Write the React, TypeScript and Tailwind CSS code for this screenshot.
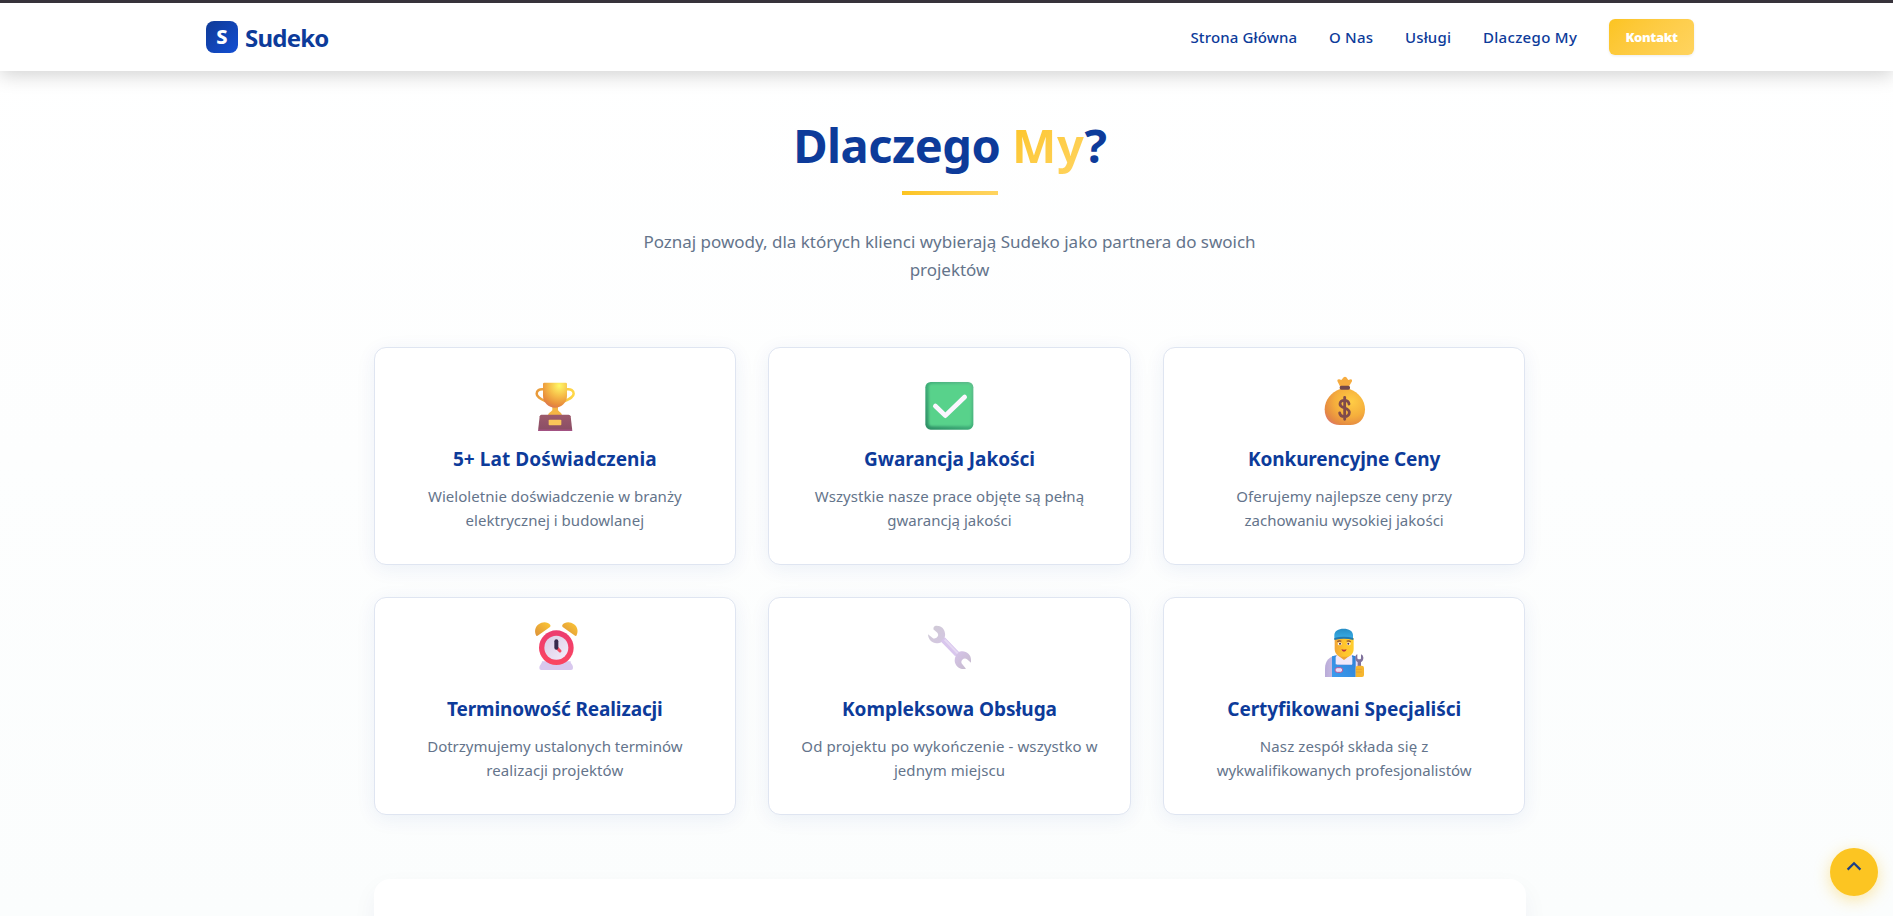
import React from "react";
import { clsx } from "clsx";

const TrophyIcon = () => (
  <svg viewBox="0 0 270 240" className="h-20 w-[90px]" aria-hidden="true">
    <defs>
      <radialGradient id="cup" cx="0.68" cy="0.12" r="0.95">
        <stop offset="0" stopColor="#fff867" />
        <stop offset="0.45" stopColor="#f6bd49" />
        <stop offset="0.8" stopColor="#e98f3b" />
        <stop offset="1" stopColor="#d97452" />
      </radialGradient>
      <linearGradient id="handles" x1="0" x2="1">
        <stop offset="0" stopColor="#e89a3c" />
        <stop offset="1" stopColor="#ffd846" />
      </linearGradient>
      <linearGradient id="plinth" x1="0" y1="0" x2="0" y2="1">
        <stop offset="0" stopColor="#9c5a6b" />
        <stop offset="0.85" stopColor="#8c4f66" />
        <stop offset="1" stopColor="#a8528a" />
      </linearGradient>
    </defs>
    <path d="M101 73C88 71 80 77 80 86c0 10 11 15 27 23M170 73c13-2 21 4 21 13 0 10-11 15-28 23" fill="none" stroke="url(#handles)" strokeWidth="7.5" />
    <path d="M127 122h17v14c4 5 12 8 12 16h-42c0-8 9-11 13-16z" fill="#f5b544" />
    <path d="M99 57q0-4 4-4h64q4 0 4 4v36c0 20-17 35-36 35S99 113 99 93z" fill="url(#cup)" />
    <path d="M94 149h82q5 0 6 5l5 44H84l5-44q1-5 5-5z" fill="url(#plinth)" />
    <rect x="116" y="164" width="38" height="17" rx="2.5" fill="#fac659" />
  </svg>
);

const CheckIcon = () => (
  <svg viewBox="-3 0 270 240" className="h-20 w-[90px]" aria-hidden="true">
    <defs>
      <linearGradient id="tile" x1="0" y1="1" x2="1" y2="0">
        <stop offset="0" stopColor="#2f8f66" />
        <stop offset="0.5" stopColor="#3fae78" />
        <stop offset="1" stopColor="#62bb8d" />
      </linearGradient>
      <filter id="soften" x="-10%" y="-10%" width="120%" height="120%">
        <feGaussianBlur stdDeviation="3" />
      </filter>
    </defs>
    <rect x="61" y="51" width="144" height="143" rx="16" fill="url(#tile)" />
    <rect x="71" y="56" width="129" height="128" rx="10" fill="#58d28b" filter="url(#soften)" />
    <path d="M91 123l30 29 58-56" fill="none" stroke="#fbf6ff" strokeWidth="14" strokeLinecap="round" strokeLinejoin="round" />
  </svg>
);

const MoneyBagIcon = () => (
  <svg viewBox="-3 0 270 240" className="h-20 w-[90px]" aria-hidden="true">
    <defs>
      <radialGradient id="sack" cx="0.66" cy="0.35" r="0.75">
        <stop offset="0" stopColor="#ffcd45" />
        <stop offset="0.55" stopColor="#f5ae3c" />
        <stop offset="0.9" stopColor="#e58a42" />
        <stop offset="1" stopColor="#e07d5d" />
      </radialGradient>
    </defs>
    <path d="M121 66l-9-18q-1-6 6-5l6 2 7-8q4-3 8 0l6 8 7-2q6 0 4 6l-10 17z" fill="#f6ac40" />
    <path d="M120 72h29c27 10 46 34 46 61 0 31-20 47-44 47h-32c-26 0-45-16-45-47 0-27 19-51 46-61z" fill="url(#sack)" />
    <rect x="119" y="62" width="31" height="12" rx="5" fill="#73484b" />
    <path d="M147 117c-1-8-7-11-14-11-8 0-13 5-13 11 0 15 28 9 28 25 0 8-6 13-14 13-9 0-14-4-15-11M134 97v66" fill="none" stroke="#804b4b" strokeWidth="8.5" strokeLinecap="round" />
  </svg>
);

const AlarmClockIcon = () => (
  <svg viewBox="0 15 270 240" className="h-20 w-[90px]" aria-hidden="true">
    <defs>
      <linearGradient id="bell" x1="0" y1="1" x2="1" y2="0">
        <stop offset="0" stopColor="#dc9139" />
        <stop offset="1" stopColor="#fdc936" />
      </linearGradient>
      <linearGradient id="rim" x1="0" y1="0" x2="0" y2="1">
        <stop offset="0" stopColor="#ec3c70" />
        <stop offset="1" stopColor="#fb4560" />
      </linearGradient>
      <linearGradient id="dial" x1="0" y1="0" x2="1" y2="1">
        <stop offset="0" stopColor="#d9cbe5" />
        <stop offset="1" stopColor="#f4edfa" />
      </linearGradient>
    </defs>
    <path d="M79 77C72 66 75 50 86 43c11-9 28-8 35 2q2 4-2 7L85 76q-4 3-6 1z" fill="url(#bell)" />
    <path d="M199 77c7-11 4-27-7-34-11-9-28-8-35 2q-2 4 2 7l34 24q4 3 6 1z" fill="url(#bell)" />
    <path d="M96 154h86q-2 4 5 11 2 3 2 9 0 6-6 6H94q-6 0-6-6 0-6 3-9 6-7 5-11z" fill="#d8c8ee" />
    <circle cx="139" cy="113" r="52" fill="url(#rim)" />
    <circle cx="139" cy="113" r="36" fill="url(#dial)" />
    <path d="M140 113l10 10" stroke="#f84b60" strokeWidth="9" strokeLinecap="round" />
    <path d="M139 94v19" stroke="#392a4c" strokeWidth="12" strokeLinecap="round" />
  </svg>
);

const WrenchIcon = () => (
  <svg viewBox="-3 15 270 240" className="h-20 w-[90px]" aria-hidden="true">
    <defs>
      <linearGradient id="steel" x1="0" y1="0" x2="1" y2="1">
        <stop offset="0" stopColor="#cfcbd4" />
        <stop offset="0.3" stopColor="#d3c7df" />
        <stop offset="0.55" stopColor="#d9c5ef" />
        <stop offset="1" stopColor="#c5bbcb" />
      </linearGradient>
    </defs>
    <path d="M90 48c15-3 29 7 30 22 1 5 0 9-1 13l41 43c4-1 7-2 12-2 14 0 26 11 26 25v9l-12-10c-4-4-10-3-14 1s-4 10 0 14l11 13c-16 5-33-7-34-24 0-5 1-10 3-14l-43-42c-4 3-9 4-14 4-14 0-25-11-26-27l13 10c4 4 11 3 14-1 4-4 5-9 1-14l-12-10q0-9 5-10z" fill="url(#steel)" />
    <path d="M114 88l42 44" stroke="#d9c6ee" strokeWidth="17" />
    <path d="M119 89l39 41" stroke="#e5d9f2" strokeWidth="6" />
  </svg>
);

const MechanicIcon = () => (
  <svg viewBox="-3 15 270 240" className="h-20 w-[90px]" aria-hidden="true">
    <defs>
      <linearGradient id="face" x1="0" x2="1">
        <stop offset="0" stopColor="#f1a537" />
        <stop offset="0.5" stopColor="#ffc52b" />
        <stop offset="1" stopColor="#ffce30" />
      </linearGradient>
      <linearGradient id="cap" x1="0" y1="0" x2="0" y2="1">
        <stop offset="0" stopColor="#268cc4" />
        <stop offset="1" stopColor="#3aaee6" />
      </linearGradient>
      <linearGradient id="overalls" x1="0" x2="1" y1="1" y2="0">
        <stop offset="0" stopColor="#3b9bee" />
        <stop offset="1" stopColor="#2f80d5" />
      </linearGradient>
      <linearGradient id="shirt" x1="0" x2="1">
        <stop offset="0" stopColor="#b9abd8" />
        <stop offset="0.6" stopColor="#dfd3f1" />
        <stop offset="1" stopColor="#e9def6" />
      </linearGradient>
    </defs>
    <path d="M75 201v-25c0-24 14-38 37-40h42c14 1 26 12 29 30v35z" fill="url(#shirt)" />
    <path d="M96 139l14-3v28h46v-28l11 3v62H96z" fill="url(#overalls)" />
    <path d="M115 122h34v20l-17 12-17-12z" fill="#eda433" />
    <path d="M112 135l20 15 20-15 5 6v22h-50v-22z" fill="#f1e8fa" />
    <path d="M104 84h57v32c0 14-9 24-22 24h-13c-13 0-22-10-22-24z" fill="url(#face)" />
    <path d="M103 86V75c0-12 12-19 28-19s28 7 28 19v11q-28-7-56 0z" fill="url(#cap)" />
    <path d="M103 84q28-7 57 0v6q-28-7-57 0z" fill="#2278ad" />
    <path d="M112 95q5-4 12-1M140 94q6-3 12 1" stroke="#8a4b32" strokeWidth="3.5" fill="none" />
    <ellipse cx="119" cy="101" rx="6" ry="4.5" fill="#fff5ea" />
    <ellipse cx="146" cy="101" rx="6" ry="4.5" fill="#fff5ea" />
    <circle cx="120" cy="101" r="3" fill="#503044" />
    <circle cx="145" cy="101" r="3" fill="#503044" />
    <path d="M124 118q8 2 16 0-2 7-8 7t-8-7z" fill="#bb353a" />
    <rect x="105" y="173" width="23" height="14" rx="7" fill="#e6dcf5" stroke="#b95a9d" strokeWidth="3" />
    <path d="M166 140q1-6 6-7v11q0 4 3 4h5q3 0 3-4v-11q6 2 7 9 1 10-7 15v14h-10v-14q-8-6-7-17z" fill="#80729c" />
    <path d="M167 174q0-7 7-7h11q7 0 7 7v21q0 6-6 6h-19z" fill="#f6b62e" />
    <path d="M168 178h17M168 186h17" stroke="#e09a30" strokeWidth="2" />
  </svg>
);

type Line = { text: string; tracking: string };
type Feature = { icon: React.FC; title: Line; body: [Line, Line] };

const features: Feature[] = [
  {
    icon: TrophyIcon,
    title: { text: "5+ Lat Doświadczenia", tracking: "tracking-[0.07px]" },
    body: [
      { text: "Wieloletnie doświadczenie w branży", tracking: "tracking-[0.03px]" },
      { text: "elektrycznej i budowlanej", tracking: "tracking-[0.03px]" },
    ],
  },
  {
    icon: CheckIcon,
    title: { text: "Gwarancja Jakości", tracking: "tracking-[-0.02px]" },
    body: [
      { text: "Wszystkie nasze prace objęte są pełną", tracking: "tracking-[0.06px]" },
      { text: "gwarancją jakości", tracking: "tracking-[0.02px]" },
    ],
  },
  {
    icon: MoneyBagIcon,
    title: { text: "Konkurencyjne Ceny", tracking: "tracking-[-0.12px]" },
    body: [
      { text: "Oferujemy najlepsze ceny przy", tracking: "tracking-[0.02px]" },
      { text: "zachowaniu wysokiej jakości", tracking: "tracking-[0.02px]" },
    ],
  },
  {
    icon: AlarmClockIcon,
    title: { text: "Terminowość Realizacji", tracking: "tracking-[-0.12px]" },
    body: [
      { text: "Dotrzymujemy ustalonych terminów", tracking: "tracking-[-0.02px]" },
      { text: "realizacji projektów", tracking: "tracking-[0.08px]" },
    ],
  },
  {
    icon: WrenchIcon,
    title: { text: "Kompleksowa Obsługa", tracking: "tracking-[-0.03px]" },
    body: [
      { text: "Od projektu po wykończenie - wszystko w", tracking: "tracking-[0.11px]" },
      { text: "jednym miejscu", tracking: "tracking-[0.06px]" },
    ],
  },
  {
    icon: MechanicIcon,
    title: { text: "Certyfikowani Specjaliści", tracking: "tracking-[-0.05px]" },
    body: [
      { text: "Nasz zespół składa się z", tracking: "tracking-[0.1px]" },
      { text: "wykwalifikowanych profesjonalistów", tracking: "tracking-[-0.01px]" },
    ],
  },
];

const links: Line[] = [
  { text: "Strona Główna", tracking: "tracking-[0.13px]" },
  { text: "O Nas", tracking: "tracking-[0.2px]" },
  { text: "Usługi", tracking: "tracking-[0.15px]" },
  { text: "Dlaczego My", tracking: "tracking-[0.32px]" },
];

function Header() {
  return (
    <header className="relative z-10 border-t-[3px] border-[#37333b] bg-white pl-[7px] shadow-[0_4px_18px_rgba(0,0,0,0.18)]">
      <div className="mx-auto flex h-[68px] w-[1488px] items-center justify-between">
        <a href="#" className="flex items-center gap-[7px]">
          <span className="flex size-8 items-center justify-center rounded-lg bg-linear-135 from-[#0f3a96] to-[#134fd4] text-[20px] font-extrabold text-white">
            S
          </span>
          <span className="pt-px text-2xl font-bold tracking-[-0.78px] text-[#0d3b9a]">Sudeko</span>
        </a>
        <nav className="flex items-center gap-[31.8px] text-[15px] font-medium text-[#0d3b9a]">
          {links.map((l) => (
            <a key={l.text} href="#" className={clsx("whitespace-nowrap", l.tracking)}>
              {l.text}
            </a>
          ))}
          <a
            href="#"
            className="flex h-9 w-[85px] items-center justify-center rounded-md bg-linear-135 from-[#fcc41f] to-[#ffd45f] pt-px text-[13px] font-black tracking-[-0.35px] text-white shadow-[0_1px_3px_rgba(0,0,0,0.08)]"
          >
            Kontakt
          </a>
        </nav>
      </div>
    </header>
  );
}

function FeatureCard({ icon: Icon, title, body }: Feature) {
  return (
    <article className="flex h-[218px] flex-col items-center rounded-xl border border-[#dfe5f1] bg-white pt-[17px] text-center shadow-[0_4px_20px_rgba(13,59,154,0.07)]">
      <Icon />
      <h3 className={clsx("mt-0.5 text-[19px] leading-6 font-bold text-[#0d3b9a]", title.tracking)}>{title.text}</h3>
      <p className="mt-[13px] text-[15px] leading-6 text-[#64748b]">
        {body.map((l) => (
          <span key={l.text} className={clsx("block whitespace-nowrap", l.tracking)}>
            {l.text}
          </span>
        ))}
      </p>
    </article>
  );
}

export default function App() {
  return (
    <div className="h-screen overflow-hidden bg-linear-to-b from-white to-[#fbfdfd] font-['Noto_Sans','Open_Sans',sans-serif]">
      <Header />
      <main className="pl-[6px]">
        <section className="mx-auto flex w-[1152px] flex-col items-center pt-[46px]">
          <h2 className="text-[47px] leading-14 font-bold whitespace-nowrap text-[#0d3b9a]">
            <span className="tracking-[-0.5px]">Dlaczego </span>
            <span className="bg-linear-135 from-[#fcc41f] to-[#ffd45f] bg-clip-text tracking-[0.6px] text-transparent">My</span>
            <span className="tracking-[-1px]">?</span>
          </h2>
          <div className="mt-[18px] h-1 w-24 bg-linear-to-r from-[#fcc41f] to-[#ffd45f]" />
          <p className="mt-[33px] text-center text-[17px] leading-7 text-[#64748b]">
            <span className="block tracking-[-0.01px] whitespace-nowrap">
              Poznaj powody, dla których klienci wybierają Sudeko jako partnera do swoich
            </span>
            <span className="block tracking-[-0.02px]">projektów</span>
          </p>
          <div className="mt-[63px] grid w-full grid-cols-3 gap-8">
            {features.map((f) => (
              <FeatureCard key={f.title.text} {...f} />
            ))}
          </div>
          <div className="mt-16 h-60 w-full shrink-0 rounded-2xl bg-white shadow-[0_10px_24px_rgba(13,40,90,0.05)]" />
        </section>
      </main>
      <button
        aria-label="Do góry"
        className="fixed right-[15px] bottom-5 z-20 flex size-12 justify-center rounded-full bg-[#fcc522] pt-[13px] shadow-[0_4px_16px_rgba(252,197,34,0.4)]"
      >
        <svg viewBox="0 0 16 10" className="h-2.5 w-4" fill="none" stroke="#1c3f86" strokeWidth="2.2">
          <path d="M1.6 8.6L8 2.2l6.4 6.4" />
        </svg>
      </button>
    </div>
  );
}
